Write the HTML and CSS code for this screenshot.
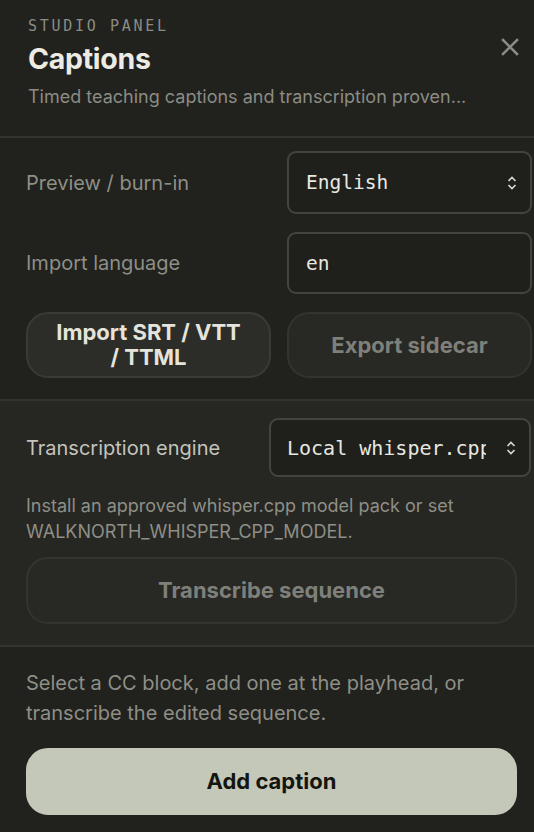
FILE: index.html
```html
<!DOCTYPE html>
<html lang="en">
<head>
    <meta charset="UTF-8">
    <meta name="viewport" content="width=device-width, initial-scale=1.0">
    <title>Captions - Studio Panel</title>
    <link rel="stylesheet" href="styles.css">
</head>
<body>
    <div class="panel">
        <header class="panel-header">
            <div class="titles">
                <div class="eyebrow">STUDIO PANEL</div>
                <h1>Captions</h1>
                <p class="subtitle">Timed teaching captions and transcription proven...</p>
            </div>
            <button class="close" aria-label="Close">
                <svg width="18" height="18" viewBox="0 0 18 18"><path d="M2 2 L16 16 M16 2 L2 16" stroke="currentColor" stroke-width="2.6" stroke-linecap="square"/></svg>
            </button>
        </header>

        <section class="section">
            <div class="field-grid">
                <label class="field-label">Preview / burn-in</label>
                <div class="select">
                    <span>English</span>
                    <svg class="chevrons" width="12" height="18" viewBox="0 0 12 18"><path d="M2.5 7 L6 3.5 L9.5 7 M2.5 11 L6 14.5 L9.5 11" fill="none" stroke="currentColor" stroke-width="1.6"/></svg>
                </div>

                <label class="field-label">Import language</label>
                <div class="text-input">en</div>

                <button class="btn">Import SRT / VTT / TTML</button>
                <button class="btn disabled">Export sidecar</button>
            </div>
        </section>

        <section class="section raised">
            <div class="engine-row">
                <label class="field-label">Transcription engine</label>
                <div class="select engine">
                    <span class="clip">Local whisper.cpp</span>
                    <svg class="chevrons" width="12" height="18" viewBox="0 0 12 18"><path d="M2.5 7 L6 3.5 L9.5 7 M2.5 11 L6 14.5 L9.5 11" fill="none" stroke="currentColor" stroke-width="1.6"/></svg>
                </div>
            </div>
            <p class="hint">Install an approved whisper.cpp model pack or set WALKNORTH_WHISPER_CPP_MODEL.</p>
            <button class="btn wide disabled">Transcribe sequence</button>
        </section>

        <section class="section footer">
            <p class="empty">Select a CC block, add one at the playhead, or transcribe the edited sequence.</p>
            <button class="btn wide primary">Add caption</button>
        </section>
    </div>
</body>
</html>
```

FILE: styles.css
```css
body {
    margin: 0;
    background-color: #21211e;
    font-family: Inter, "Noto Sans", sans-serif;
    color: #e6e6de;
}
.panel {
    width: 534px;
    overflow: hidden;
}
.panel-header {
    display: flex;
    justify-content: space-between;
    padding: 16px 14px 0 28px;
    height: 120px;
    border-bottom: 2px solid #33332f;
}
.eyebrow {
    font-family: "DejaVu Sans Mono", monospace;
    font-size: 15px;
    letter-spacing: 2.7px;
    color: #8b8c84;
    line-height: 20px;
}
h1 {
    margin: 4px 0 0;
    font-size: 28.5px;
    font-weight: 700;
    letter-spacing: -0.3px;
    line-height: 38px;
    color: #ecece4;
}
.subtitle {
    margin: 7px 0 0;
    font-size: 18px;
    line-height: 24px;
    color: #8b8c84;
    white-space: nowrap;
}
.close {
    background: none;
    border: none;
    padding: 0;
    margin-top: 22px;
    width: 20px;
    height: 20px;
    color: #8a8b82;
    cursor: pointer;
}
.section {
    padding: 13px 17px 21px 26px;
    border-bottom: 2px solid #33332f;
}
.raised {
    background-color: #262623;
    padding-top: 17px;
}
.footer {
    border-bottom: none;
    padding-top: 21px;
}
.field-grid {
    display: grid;
    grid-template-columns: 245px 245px;
    column-gap: 16px;
    row-gap: 18px;
    align-items: center;
}
.field-label {
    font-size: 20px;
    color: #8e8f86;
}
.select, .text-input {
    box-sizing: border-box;
    height: 63px;
    display: flex;
    align-items: center;
    justify-content: space-between;
    padding: 0 12px 0 17px;
    border: 2px solid #44443f;
    border-radius: 9px;
    background-color: #1f1f1c;
    font-family: "DejaVu Sans Mono", monospace;
    font-size: 19.5px;
    color: #e8e8e0;
}
.text-input {
    height: 62px;
}
.chevrons {
    color: #d8d8d0;
    flex: none;
}
.btn {
    box-sizing: border-box;
    height: 66px;
    border: 2px solid #3a3a36;
    border-radius: 22px;
    background-color: #2c2c29;
    color: #e4e4dc;
    font-family: Inter, "Noto Sans", sans-serif;
    font-size: 22px;
    font-weight: 700;
    line-height: 25px;
    padding: 0 24px;
    cursor: pointer;
}
.btn.disabled {
    background-color: #282825;
    border-color: #34342f;
    color: #7f807a;
}
.engine-row {
    display: flex;
    align-items: center;
    justify-content: space-between;
    margin-right: -14px;
}
.engine-row .field-label {
    color: #c4c4bc;
}
.select.engine {
    width: 262px;
    height: 59px;
    padding-left: 16px;
    font-size: 20px;
}
.clip {
    overflow: hidden;
    white-space: nowrap;
    width: 199px;
}
.hint {
    margin: 16px 0 0;
    font-size: 18px;
    line-height: 26px;
    color: #8e8f86;
}
.btn.wide {
    display: block;
    width: 491px;
    height: 67px;
    margin-top: 12px;
}
.empty {
    margin: 0;
    font-size: 20px;
    line-height: 30px;
    color: #8e8f86;
}
.btn.primary {
    margin-top: 20px;
    background-color: #c4c8b8;
    border-color: #c4c8b8;
    color: #151510;
}
```
